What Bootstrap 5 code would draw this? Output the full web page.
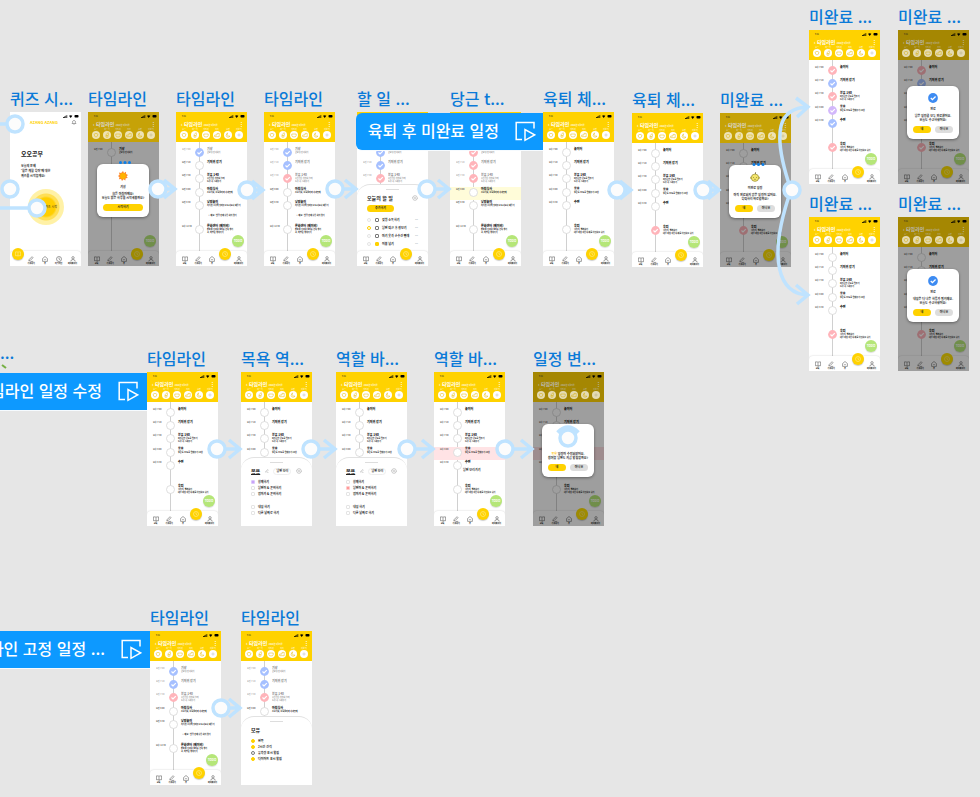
<!DOCTYPE html>
<html lang="ko">
<head>
<meta charset="utf-8">
<meta name="viewport" content="width=device-width, initial-scale=1">
<title>타임라인 프로토타입</title>
<link href="https://cdn.jsdelivr.net/npm/bootstrap@5.3.0/dist/css/bootstrap.min.css" rel="stylesheet">
<style>
:root{--sun:#ffd200;--ink:#222;--link:#bfe3ff}
body{background:#e6e6e6;font-family:"Noto Sans CJK KR","Noto Sans",sans-serif;color:var(--ink)}
button{border:0;padding:0;background:none;color:inherit;font-weight:inherit}
.canvas{min-height:100vh}
.frame{position:absolute;width:71px}
.frame-name{font-size:16px;line-height:20px;font-weight:500;color:#0a7ad8;white-space:nowrap;height:24px}
.phone{height:154px;font-size:2px;line-height:3px}
/* header */
.top{background:var(--sun);height:30px;color:#fff}
.clock{color:#222;padding:3px 2px 1px 6px;height:7px}
.head-title{font-size:5px;line-height:8px;font-weight:700;height:9px;padding:1px 3px 0 5px}
.head-title small{font-size:2px;font-weight:700}
.cats{padding:0 4px}
.cats div{width:8px}
.cats svg,.dot svg{display:block}
/* schedule */
.plan{padding-top:5px}
.plan::before{content:"";position:absolute;left:23px;top:0;bottom:0;width:1px;background:#d0d0d0}
.slot{height:13px;position:relative}
.slot:nth-child(4){margin-top:1px}
.slot.last{margin-top:11px;height:16px}
.slot time{width:19px;padding:1px 0 0 6px;font-weight:700;white-space:nowrap;color:#555}
.dot{padding-top:1px;width:12px}
.txt{padding-top:1px;white-space:nowrap;font-weight:700}
.txt b{display:block;font-size:3px}
.past time,.past .txt{opacity:.5}
.tint-yellow{background:#fffcd9}
.tint-pink{background:#ffe3e5}
.under .txt{visibility:hidden}
.note{position:absolute;left:32px;top:72px;white-space:nowrap;font-weight:700}
.extra{position:absolute;left:29px;top:67px;font-size:3px;font-weight:700;white-space:nowrap}
.todo{position:absolute;right:3px;bottom:19px;width:12px;height:12px;background:#b5e678;color:#fff;font-size:3px;font-weight:700;box-shadow:0 1px 1px #0002}
/* tab bar */
.tabs{position:absolute;left:0;right:0;bottom:0;height:15px;background:#fff;border-radius:4px 4px 0 0;box-shadow:0 0 2px #0003;padding:3px 2px 0}
.tabs button{width:13px;height:12px;font-size:2px;line-height:3px;font-weight:700}
.tabs svg{display:block;margin:0 auto}
.tabs .fab{height:12px;width:12px;border-radius:50%;background:var(--sun);margin-top:-6px;box-shadow:0 1px 1px #0003}
/* sheet */
.sheet{position:absolute;left:0;right:0;bottom:0;background:#fff;border-top:1px solid #e2e2e2;border-radius:13px 13px 0 0;padding:4px 10px 0 10px;font-weight:700;font-size:3px}
.sheet.mid{top:85px}.sheet.tall{top:72px;bottom:15px}
.grip{width:13px;height:1px;background:#ddd;margin:0 auto}
.sheet h3{font-size:5px;line-height:8px;font-weight:700;margin:0}
.sheet-head{height:16px}
.tall .sheet-head{height:15px}
.pill{border-radius:4px;height:7px;background:var(--sun);font-size:3px;line-height:3px;font-weight:700}
.who{border:1px solid #eee;border-radius:4px;padding:1px 2px;line-height:3px}
.pick{height:6px;gap:3px;white-space:nowrap}
.tall .pick{height:8px}
.pick.space{margin-top:7px}
.pick input{appearance:none;width:4px;height:4px;margin:0;border:1px solid #e4e4e4;border-radius:1px}
.pick input[type=radio]{border-radius:50%}
.pick .yellow{border-color:var(--sun)}
.pick .full{background:var(--sun);border-color:var(--sun)}
.pick .violet{background:#c9a3f8;border-color:#dcc7fb}
.pick .red{background:#f99;border-color:#fcc}
.pick .dark{border-color:#777}
/* dimmed frames and dialogs */
.shade{position:absolute;inset:30px 0 0 0;background:#00000061}
.dim .top{background:#c6a207;color:#d9d9d9}
.deep .top{background:#a58702;color:#bbb}
.dim .cats svg{opacity:.7}
.dim .fab{background:#ffe000}
.dialog-box{position:absolute;left:9px;right:10px;height:53px;background:#fff;border-radius:6px;box-shadow:0 1px 3px #0006;padding:7px 6px 6px;font-weight:700;font-size:3px;line-height:4px;text-align:center;white-space:nowrap}
.at-a{top:52px}.at-b{top:56px}
.dialog-box .line{height:8px}
.dialog-box button{flex:1 1 0}
.dialog-box .no{background:#ddd}
/* quiz frame */
.brand{font-size:4px;line-height:6px;font-weight:700;color:var(--sun)}
.quiz h3{font-size:6px;line-height:8px;font-weight:700;margin:25px 0 6px 11px}
.quiz p{font-size:3px;line-height:5px;margin-left:11px;font-weight:700}
.glow{width:36px;height:36px;margin:10px auto 0 18px;border-radius:50%;background:radial-gradient(circle,#ffcf00 0 9px,#ffdf55 11px 13px,#fff1a6 14px 18px);font-size:3px}
.glow button{font-size:3px;padding-left:10px}
/* flow banners */
.banner{position:absolute;background:#0d99ff;color:#fff;height:37px;font-size:16px;line-height:24px;font-weight:500;white-space:nowrap;gap:16px;overflow:hidden;box-shadow:0 1px 0 #f6fbff}
.banner span{padding-bottom:3px}
.banner-a{left:356px;top:113px;width:187px;border-radius:6px 0 0 6px;padding-right:7px}
.banner-b{left:0;top:373px;width:147px;padding-right:8px}
.banner-c{left:0;top:631px;width:150px;padding-right:8px}
.banner svg{flex:none}
.wires{position:absolute;left:0;top:0;pointer-events:none}
.cut{position:absolute;left:0;top:340px;font-size:16px;line-height:24px;color:#0a7ad8;font-weight:500}
</style>
<script src="https://cdn.jsdelivr.net/npm/bootstrap@5.3.0/dist/js/bootstrap.bundle.min.js"></script>
</head>
<body>
<svg class="d-none">
  <symbol id="status" viewBox="0 0 16 3"><path d="M0 3V2h.8v1zM1.2 3V1.5H2V3zM2.4 3V.8h.8V3zM3.6 3V0h.6v3z"/><path d="M6 .8Q7.700-.5 9.400.8L7.700 3z"/><rect x="11.500" width="4" height="2.600" rx=".8"/></symbol>
  <symbol id="check" viewBox="0 0 9 9"><circle cx="4.500" cy="4.500" r="4.400"/><path d="M2.500 4.500 4 6 6.800 3.200" fill="none" stroke="#fff" stroke-width="1.200"/></symbol>
  <symbol id="open" viewBox="0 0 9 9"><circle cx="4.500" cy="4.500" r="4" fill="#fff" stroke="#d6d6d6" stroke-width=".8"/></symbol>
  <symbol id="book" viewBox="0 0 6 6"><path d="M3 1.300V5.200M.4.900H2.200L3 1.300 3.800.900H5.600V4.700H3.800L3 5.200 2.200 4.700H.4z"/></symbol>
  <symbol id="pen" viewBox="0 0 6 6"><path d="M.8 4.800 1.200 3.500 4 .7 5 1.700 2.200 4.500zM2.800 5.400H5.300"/></symbol>
  <symbol id="home" viewBox="0 0 6 6"><path d="M.6 2.500 3 .5 5.400 2.500V5.400H.6zM2.200 3.400Q3 4.600 3.800 3.400"/></symbol>
  <symbol id="time" viewBox="0 0 6 6"><circle cx="3" cy="3" r="2.500"/><path d="M3 1.500V3.100L4.100 3.700"/></symbol>
  <symbol id="user" viewBox="0 0 6 6"><circle cx="3" cy="1.800" r="1.200"/><path d="M.8 5.500Q.8 3.500 3 3.500T5.200 5.500"/></symbol>
  <symbol id="gear" viewBox="0 0 6 6"><circle cx="3" cy="3" r="2.300" stroke-dasharray="1 .3" stroke-width=".9"/><circle cx="3" cy="3" r=".9"/></symbol>
  <symbol id="cat0" viewBox="0 0 8 8"><path d="M2 3.300Q4 1.200 6 3.300 5.500 6 4 6T2 3.300z"/></symbol>
  <symbol id="cat1" viewBox="0 0 8 8"><path d="M3 6.200V3.800L5 1.600 5.500 3 4.800 6.200zM3 4.500H5"/></symbol>
  <symbol id="cat2" viewBox="0 0 8 8"><path d="M1.800 3H6.200V4.500Q6 6 4 6T1.800 4.500z"/></symbol>
  <symbol id="cat3" viewBox="0 0 8 8"><path d="M1.700 5.700V4H4V2.400H6.200V5.700z"/></symbol>
  <symbol id="cat4" viewBox="0 0 8 8"><path d="M3.500 1.800Q2 5 6 5.200 5 6.600 3 6 .9 4.600 3.500 1.800z"/></symbol>
  <symbol id="cat5" viewBox="0 0 8 8"><path d="M4 2.300V5.700M2.300 4H5.700" stroke="#bbb"/></symbol>
  <symbol id="sun" viewBox="0 0 10 10"><path d="M5 0 6 2 8 .8 8.100 3 10 4 8.600 5.300 9.700 7 7.700 7.300 7.300 9.500 5.500 8.300 4 10 3.100 8 .9 8.300 1.500 6.200 0 5 1.600 3.800.9 1.600 3.100 2z" fill="#ff8b2c"/><circle cx="5" cy="5" r="2.900" fill="#ffb400"/></symbol>
  <symbol id="baby" viewBox="0 0 10 10"><path d="M5 .3Q6.800.8 5 2" fill="none" stroke="#5a4a10" stroke-width=".7"/><circle cx="1.300" cy="5.800" r="1.100" fill="#e6d85a" stroke="#746b20" stroke-width=".3"/><circle cx="8.700" cy="5.800" r="1.100" fill="#e6d85a" stroke="#746b20" stroke-width=".3"/><circle cx="5" cy="5.700" r="3.700" fill="#f3e56b" stroke="#746b20" stroke-width=".5"/><path d="M3.300 5.500h.7M6 5.500h.7M4.300 7.200Q5 7.800 5.700 7.200" fill="none" stroke="#4a4010" stroke-width=".6"/></symbol>
  <symbol id="play" viewBox="0 0 21 21"><path d="M7 18.500H1.200V1.500H19V7.500M10 8.500V19.300L19.600 13.900z" fill="none" stroke="#fff" stroke-width="1.500"/></symbol>
</svg>

<main class="canvas position-relative overflow-hidden" id="board">
  <span class="cut">...</span>
</main>

<script>
const icon = (id, w, h = w, cls = '', paint = '') => `<svg width="${w}" height="${h}" class="${cls}" ${paint}><use href="#${id}"/></svg>`;
const line = c => `fill="none" stroke="${c}" stroke-width=".5"`;

const day = [
  ['오전 7:00', '기상', '굿모닝 인사하기'],
  ['오전 7:10', '기저귀 갈기'],
  ['오전 7:30', '분유 140', '수유량은 천천히 늘려<br>트림 꼭 시켜주기'],
  ['오전 8:00', '아침식사', '소고기죽, 브로콜리와 사과퓨레'],
  ['오전 8:30', '낮잠놀이', '자기전 그림책 읽어주고 토닥토닥 재우기'],
  ['오후 12:30', '문화센터 (베이비)', '준비물 기저귀 물티슈 간식 챙기<br>고, 여벌옷 챙겨가기']
];
const night = [
  ['오후 7:00', '놀이터'],
  ['오후 7:10', '기저귀 갈기'],
  ['오후 7:30', '분유 160', '미지근한 온도로 맞추기<br>트림 꼭 시켜주기'],
  ['오후 8:00', '목욕', '물온도 38도로 맞춰주기 10분'],
  ['오후 8:30', '수면'],
  ['', '육퇴', '설거지, 빨래하기<br>내일 아침 이유식 재료 확인하고 쉬기']
];
const colors = {b: '#a6c0ff', p: '#ffb4ba', v: '#d3b8fb'};

const header = () => `<header class="top">
  <div class="clock d-flex justify-content-between"><span>9:41</span>${icon('status', 16, 3)}</div>
  <div class="head-title d-flex justify-content-between"><span>‹ 타임라인 <small>2022년 5월 5일</small></span><span>⋮</span></div>
  <div class="cats d-flex justify-content-between">${['수유','이유식','기저귀','목욕','수면','더보기'].map((t, i) =>
    `<div class="text-center text-nowrap">${t}<svg width="8" height="8" ${line('#e5b800')}><circle cx="4" cy="4" r="4" fill="#fff" stroke="none"/><use href="#cat${i}"/></svg></div>`).join('')}</div>
</header>`;

const tabs = (active = 3) => `<nav class="tabs d-flex justify-content-between">${
  [['book','교육'],['pen','기록하기'],['home','홈'],['time','타임라인'],['user','마이페이지']].map(([id, t], i) =>
    i === active ? `<button class="fab" aria-label="${t}">${icon(id, 6, 6, '', line('#fff3b0'))}</button>`
                 : `<button class="text-nowrap">${icon(id, 6, 6, '', line('#444'))}<span>${t}</span></button>`).join('')}</nav>`;

function plan(f) {
  const marks = f.marks || '------';
  return `<div class="plan position-relative flex-grow-1">${(f.day ? day : night).slice(0, f.rows || 6).map(([t, title, body = ''], i) => {
    const m = marks[i];
    return `<div class="slot d-flex ${i === 5 ? 'last' : ''} ${f.day && m !== '-' ? 'past' : ''} ${f.dialog && i > 1 && i < 5 ? 'under' : ''} ${f.tint && i === 3 ? f.tint : ''}">
      <time>${t}</time><div class="dot">${m === '-' ? icon('open', 9) : icon('check', 9, 9, '', `fill="${colors[m]}"`)}</div>
      <div class="txt"><b>${title}</b>${body}</div></div>`;
  }).join('')}${f.day && !f.tint && !f.rows ? '<span class="note">☺ 메모 : 낮잠 전에 수유 하지 않기</span>' : ''}${f.extra ? '<span class="extra">남편 보러가기</span>' : ''}</div>`;
}

const pick = (kind, cls, text, extra = '') => `<label class="pick d-flex align-items-center ${extra}"><input type="${kind}" class="${cls}">${text}</label>`;
const gear = icon('gear', 6, 6, '', line('#aaa'));
const sheets = {
  todo: `<section class="sheet tall"><div class="grip"></div><div class="sheet-head d-flex justify-content-between align-items-center"><h3>오늘의 할 일</h3>${gear}</div>
    <button class="pill px-2">추가하기</button><div class="pt-1">${
    [['','','젖병 소독하기'],['yellow','','남편 퇴근 후 장보기'],['','','아기 옷과 손수건 빨래'],['','full','이불 널기']].map(([a, b, t]) =>
      `<div class="d-flex justify-content-between align-items-center"><div class="d-flex">${pick('radio', a, '', 'me-1')}${pick('checkbox', b || 'dark', t)}</div><span class="text-secondary">···</span></div>`).join('')}</div></section>`,
  role: n => `<section class="sheet mid"><div class="grip"></div><div class="sheet-head d-flex justify-content-between align-items-center"><h3 class="text-decoration-underline">목욕</h3>${icon('pen', 4, 4, '', line('#888'))}<span class="who">남편 보러</span>${gear}</div>${
    ['함께하기','남편이 & 준비하기','엄마가 & 준비하기','내일 하기','다른 날짜로 하기'].map((t, i) =>
      pick('checkbox', i === n ? (n ? 'red' : 'violet') : '', t, i === 3 ? 'space' : '')).join('')}</section>`,
  milk: `<section class="sheet mid"><div class="grip"></div><div class="sheet-head d-flex align-items-center"><h3>모유</h3></div>${
    [['full','왼쪽'],['full','2시간 간격'],['dark','유축량 표시 알림'],['full','다이어트 표시 알림']].map(([c, t]) => pick('radio', c, t)).join('')}</section>`
};

const dialog = d => `<div class="shade"></div><section class="dialog-box d-flex flex-column align-items-center justify-content-between ${d.at || 'at-a'}" role="dialog" aria-label="${d.name}">
  ${icon(d.icon, 10, 10, '', 'fill="#3d8bf2"')}<div>${d.name}</div><div class="line">${d.text}</div>
  <div class="d-flex w-100 gap-1">${d.one ? `<button class="pill">${d.one}</button>` : '<button class="pill">네</button><button class="pill no">아니오</button>'}</div></section>`;

const quiz = `<div class="quiz flex-grow-1"><div class="clock d-flex justify-content-end">${icon('status', 16, 3)}</div>
  <div class="d-flex justify-content-between ps-3 pe-1"><span class="brand ps-1">AZANG AZANG</span><svg width="6" height="6" ${line('#555')}><path d="M1 4.500H5L4.400 3.700V2.300Q3 .2 1.600 2.300V3.700zM2.500 5.300H3.500"/></svg></div>
  <h3>오오공부</h3><p class="mb-0">오늘의 문제<br>'월은 개월 육아'에 대한<br>퀴즈를 시작할게요!</p>
  <div class="glow d-flex align-items-center justify-content-center"><button>퀴즈 시작</button></div></div>`;

const frames = [
  {x: 10, y: 112, name: '퀴즈 시...', quiz: true},
  {x: 88, y: 112, name: '타임라인', dialog: {icon: 'sun', name: '기상', text: '힘든 아침이에요!<br>오늘도 밝은 하루를 시작해볼까요?', one: '시작하기'}, day: true, rows: 1},
  {x: 176, y: 112, name: '타임라인', day: true, marks: 'b-----'},
  {x: 264, y: 112, name: '타임라인', day: true, marks: 'bbp---'},
  {x: 357, y: 112, name: '할 일 ...', day: true, marks: 'bbp---', sheet: sheets.todo, bar: true, rows: 3},
  {x: 450, y: 112, name: '당근 t...', day: true, marks: 'ppp---', tint: 'tint-yellow'},
  {x: 543, y: 112, name: '육퇴 체...'},
  {x: 632, y: 113, name: '육퇴 체...', marks: '-----p'},
  {x: 720, y: 113, name: '미완료 ...', marks: '-----p', dialog: {icon: 'baby', name: '미완료 일정', text: '아직 완료되지 않은 일정이 있어요.<br>육퇴하러 바로갈까요?'}},
  {x: 809, y: 30, name: '미완료 ...', marks: 'pbpvbp'},
  {x: 898, y: 30, name: '미완료 ...', marks: 'pbpvbp', deep: true, dialog: {icon: 'check', name: '완료', text: '남은 일정을 모두 완료했어요.<br>오늘도 수고하셨어요!', at: 'at-b'}},
  {x: 809, y: 217, name: '미완료 ...', marks: '-----p'},
  {x: 898, y: 217, name: '미완료 ...', marks: '-----p', deep: true, dialog: {icon: 'check', name: '완료', text: '내일은 더 나은 하루가 될거예요.<br>오늘도 수고하셨어요!'}},
  {x: 147, y: 372, name: '타임라인'},
  {x: 241, y: 372, name: '목욕 역...', sheet: sheets.role(0), rows: 4},
  {x: 336, y: 372, name: '역할 바...', sheet: sheets.role(1), rows: 4},
  {x: 434, y: 372, name: '역할 바...', tint: 'tint-pink', extra: true},
  {x: 533, y: 372, name: '일정 변...', tint: 'tint-pink', deep: true, dialog: {icon: 'check', name: '&nbsp;', text: '<span class="text-warning">목욕</span> 일정이 수정되었어요.<br>참여할 남편도 지금 알림할까요?'}},
  {x: 150, y: 631, name: '타임라인', day: true, marks: 'bbp---'},
  {x: 241, y: 631, name: '타임라인', day: true, marks: 'bbp---', sheet: sheets.milk, rows: 4}
];

const board = document.getElementById('board');
board.insertAdjacentHTML('beforeend', frames.map(f => `<article class="frame" style="left:${f.x}px;top:${f.y - 24}px">
  <div class="frame-name">${f.name}</div>
  <div class="phone bg-white position-relative overflow-hidden d-flex flex-column ${f.dialog ? 'dim' : ''} ${f.deep ? 'deep' : ''}">
  ${f.quiz ? quiz + tabs(0) : header() + plan(f) + (f.sheet || '<button class="todo rounded-circle">TODO</button>') + (f.sheet && !f.bar ? '' : tabs()) + (f.dialog ? dialog(f.dialog) : '')}
  </div></article>`).join(''));

board.insertAdjacentHTML('beforeend', [['a', '육퇴 후 미완료 일정'], ['b', '타임라인 일정 수정'], ['c', '타임라인 고정 일정 ...']].map(([k, t]) =>
  `<div class="banner banner-${k} d-flex align-items-center justify-content-end"><span>${t}</span>${icon('play', 21)}</div>`).join(''));

/* prototype links: start node x, y, arrow tip x */
const links = [[158,189,176],[247,190,264],[335,189,357],[427,189,450],[617,190,632],[703,190,720],[217,449,241],[311,449,336],[407,449,434],[505,449,533],[221,708,241]];
const ends = [[15,124],[10,189],[37,208],[792,190]];
const node = (x, y) => `<circle cx="${x}" cy="${y}" r="8" fill="#fcfcfc"/>`;
board.insertAdjacentHTML('beforeend', `<svg class="wires" width="980" height="797" fill="none" stroke="#bfe3ff" stroke-width="3.5">
  ${links.map(([x, y, t]) => `<path d="M${x} ${y}H${t - 1}M${t - 12} ${y - 9}L${t - 1} ${y} ${t - 12} ${y + 9}"/>`).join('')}
  <path d="M0 124H15M0 208H37M791 190C770 128 780 108 808 107M796 98 808 107 797 117M791 190C766 262 780 294 808 295M796 285 808 295 797 304"/>
  <path d="M558 433Q568 423 578 433" stroke-width="5"/>
  ${links.map(([x, y]) => node(x, y)).join('')}${ends.map(([x, y]) => node(x, y)).join('')}${node(568, 438)}
  <g fill="#0d7fe8" stroke="none"><circle cx="120.500" cy="162.500" r="1.500"/><circle cx="125" cy="162.500" r="1.500"/><circle cx="129.500" cy="162.500" r="1.500"/><circle cx="754" cy="164.500" r="1.500"/><circle cx="758.500" cy="164.500" r="1.500"/><circle cx="763" cy="164.500" r="1.500"/></g>
  <path d="M2 365 6 368" stroke="#76b043" stroke-width="2"/></svg>`);
</script>
</body>
</html>
